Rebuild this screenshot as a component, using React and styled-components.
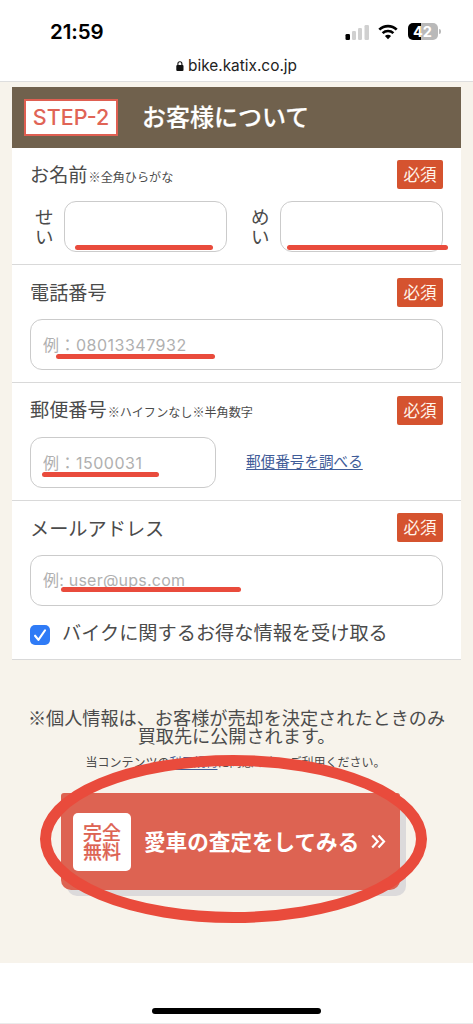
import React from "react";
import styled, { createGlobalStyle } from "styled-components";

const GlobalStyle = createGlobalStyle`
  * { box-sizing: border-box; }
  html, body { margin: 0; padding: 0; background: #fff; }
  body {
    font-family: "Noto Sans CJK JP", Inter, sans-serif;
    color: #4b4b4b;
  }
`;

const Screen = styled.div`
  width: 473px;
  height: 1024px;
  display: flex;
  flex-direction: column;
  overflow: hidden;
  background: #fff;
  border-bottom: 1px solid #ebebeb;
`;

const StatusBar = styled.div`
  height: 54px;
  padding: 9px 32px 0 50px;
  display: flex;
  align-items: center;
  justify-content: space-between;
  font-family: Inter, sans-serif;
`;

const Clock = styled.span`
  font-size: 20.5px;
  font-weight: 600;
  letter-spacing: -0.1px;
  color: #000;
`;

const StatusIcons = styled.div`
  display: flex;
  align-items: center;
`;

const Battery = styled.div`
  width: 30px;
  height: 17px;
  margin-left: 10px;
  padding-right: 1px;
  border-radius: 5px;
  background: linear-gradient(90deg, #000 0 42%, #b9b9b9 42%);
  color: #fff;
  font-size: 14.5px;
  line-height: 17px;
  font-weight: 700;
  text-align: center;
`;

const BatteryTip = styled.div`
  width: 2px;
  height: 5px;
  margin-left: 1px;
  border-radius: 0 2px 2px 0;
  background: #b9b9b9;
`;

const AddressBar = styled.div`
  height: 28px;
  padding-bottom: 4px;
  display: flex;
  align-items: center;
  justify-content: center;
  gap: 4px;
  border-bottom: 1px solid #dedede;
  font-family: Inter, sans-serif;
  font-size: 15.4px;
  line-height: 20px;
  color: #222;
`;

const Page = styled.main`
  height: 881px;
  padding: 5px 12px 0;
  background: #f7f3eb;
`;

const StepHeader = styled.header`
  height: 61px;
  padding-left: 12px;
  display: flex;
  align-items: center;
  gap: 24px;
  background: #70614d;
`;

const StepTag = styled.span`
  width: 94px;
  height: 37px;
  border: 2.5px solid #df5f52;
  background: #fff;
  color: #e06456;
  font-family: Inter, sans-serif;
  font-size: 21.5px;
  font-weight: 500;
  line-height: 33px;
  text-align: center;
`;

const StepTitle = styled.h1`
  margin: 0 0 3px;
  color: #fff;
  font-size: 24px;
  line-height: 32px;
  font-weight: 500;
  -webkit-text-stroke: 0.2px #fff;
`;

const Section = styled.section`
  height: ${(p) => p.$height}px;
  padding: ${(p) => p.$top || 12}px 18px 0;
  background: #fff;
  border-bottom: 1px solid #d9d9d9;
`;

const LabelRow = styled.div`
  display: flex;
  justify-content: space-between;
  align-items: center;
  height: 30px;
  margin-bottom: 12px;
`;

const Label = styled.div`
  padding-top: ${(p) => p.$drop}px;
  font-size: 19.2px;
  line-height: 28px;
  white-space: nowrap;
`;

const Hint = styled.small`
  margin-left: 1px;
  font-size: 12.1px;
`;

const Required = styled.span`
  width: 46px;
  height: 29px;
  border-radius: 2px;
  background: #d5532f;
  color: #fff4ea;
  font-size: 16.5px;
  line-height: 28px;
  text-align: center;
`;

const FieldRow = styled.div`
  display: flex;
  align-items: center;
`;

const Kana = styled.span`
  width: 19px;
  margin-left: ${(p) => p.$before}px;
  margin-right: ${(p) => p.$after}px;
  padding-bottom: 2px;
  font-size: 18.5px;
  line-height: 20px;
`;

const Field = styled.div`
  position: relative;
  width: ${(p) => p.$width}px;
  height: 51px;
`;

const Input = styled.input`
  width: 100%;
  height: 100%;
  padding: 0 12px;
  border: 1.5px solid #cbcbcb;
  border-radius: 12px;
  background: #fff;
  outline: none;
  font-family: Inter, "Noto Sans CJK JP", sans-serif;
  font-size: 16px;
  letter-spacing: ${(p) => p.$tracking || 0}px;
  &::placeholder { color: #b0b0b0; opacity: 1; }
`;

const Mark = styled.i`
  position: absolute;
  left: ${(p) => p.$left}px;
  top: ${(p) => p.$top}px;
  width: ${(p) => p.$width}px;
  height: 5px;
  border-radius: 3px;
  background: #e94b3c;
`;

const Link = styled.a`
  color: #3f5c98;
  text-decoration: underline;
  text-underline-offset: 2px;
`;

const LookupLink = styled(Link)`
  margin-left: 30px;
  padding-bottom: 4px;
  font-size: 14.6px;
`;

const CheckRow = styled.label`
  display: flex;
  align-items: center;
  gap: 12px;
  margin-top: 12px;
  font-size: 19.2px;
  line-height: 28px;
  white-space: nowrap;
`;

const CheckBox = styled.span`
  width: 20px;
  height: 20px;
  margin-top: 6px;
  border-radius: 5px;
  background: #2f7bf6;
  display: flex;
`;

const Notice = styled.p`
  margin: 48px 0 0;
  font-size: 18.15px;
  line-height: 18px;
  text-align: center;
  white-space: nowrap;
`;

const Terms = styled.p`
  margin: 9px 0 0;
  padding-right: 2px;
  font-size: 12px;
  line-height: 18px;
  text-align: center;
`;

const CallToAction = styled.div`
  position: relative;
  width: 339px;
  margin: 22px 0 0 49px;
`;

const SubmitButton = styled.button`
  width: 339px;
  height: 97px;
  padding: 0 0 0 12px;
  display: flex;
  align-items: center;
  border: 0;
  border-radius: 3px 3px 10px 10px;
  background: #dd6352;
  box-shadow: 6px 6px 0 #dcdadb;
  font-family: inherit;
  color: #fff;
`;

const FreeTag = styled.span`
  width: 58px;
  height: 58px;
  padding-top: 9px;
  border-radius: 5px;
  background: #fff;
  color: #dd6352;
  font-size: 19px;
  line-height: 19.5px;
  font-weight: 500;
  -webkit-text-stroke: 0.2px #dd6352;
`;

const SubmitText = styled.span`
  margin: 0 12px 2px 13px;
  font-size: 21.6px;
  line-height: 30px;
  font-weight: 700;
  white-space: nowrap;
`;

const Ring = styled.svg`
  position: absolute;
  left: -22px;
  top: -40px;
  pointer-events: none;
`;

const HomeArea = styled.footer`
  flex: 1;
  display: flex;
  justify-content: center;
  padding-top: 45px;
`;

const HomeBar = styled.div`
  width: 169px;
  height: 6px;
  border-radius: 3px;
  background: #000;
`;

const SignalIcon = () => (
  <svg width="25" height="16" viewBox="0 0 25 16">
    <rect x="0.5" y="10" width="4.5" height="6" rx="1.3" fill="#000" />
    <rect x="7" y="7" width="4" height="9" rx="1.3" fill="#d0d0d0" />
    <rect x="13" y="4" width="4" height="12" rx="1.3" fill="#d0d0d0" />
    <rect x="19.5" y="1" width="4.5" height="15" rx="1.3" fill="#d0d0d0" />
  </svg>
);

const WifiSvg = styled.svg`
  margin-left: 8px;
`;

const WifiIcon = () => (
  <WifiSvg width="20" height="16" viewBox="0 0 20 16">
    <path d="M1.3 5.6C6.2.9 13.8.9 18.7 5.6" fill="none" stroke="#000" strokeWidth="2.7" />
    <path d="M4.6 9.1c3-2.8 7.8-2.8 10.8 0" fill="none" stroke="#000" strokeWidth="2.6" />
    <path d="M6.9 11.9c1.8-1.6 4.4-1.6 6.2 0L10 15.2z" fill="#000" />
  </WifiSvg>
);

const LockIcon = () => (
  <svg width="8" height="10" viewBox="0 0 8 10">
    <rect x="0.3" y="4" width="7.2" height="6" rx="1.1" fill="#111" />
    <path d="M1.9 5V2.7a2 2 0 0 1 4 0V5" fill="none" stroke="#111" strokeWidth="1.1" />
  </svg>
);

const Heading = ({ children, hint, drop = 0 }) => (
  <LabelRow>
    <Label $drop={drop}>{children}{hint && <Hint>{hint}</Hint>}</Label>
    <Required>必須</Required>
  </LabelRow>
);

const MarkedField = ({ width, mark, ...input }) => (
  <Field $width={width}>
    <Input {...input} />
    <Mark $left={mark[0]} $top={mark[1]} $width={mark[2]} />
  </Field>
);

export default function App() {
  return (
    <Screen>
      <GlobalStyle />
      <StatusBar>
        <Clock>21:59</Clock>
        <StatusIcons>
          <SignalIcon />
          <WifiIcon />
          <Battery>42</Battery>
          <BatteryTip />
        </StatusIcons>
      </StatusBar>
      <AddressBar>
        <LockIcon />
        <span>bike.katix.co.jp</span>
      </AddressBar>

      <Page>
        <StepHeader>
          <StepTag>STEP-2</StepTag>
          <StepTitle>お客様について</StepTitle>
        </StepHeader>

        <Section $height={117} $top={11}>
          <Heading hint="※全角ひらがな" drop={2}>お名前</Heading>
          <FieldRow>
            <Kana $before={5} $after={10}>せい</Kana>
            <MarkedField width={163} mark={[11, 44, 138]} />
            <Kana $before={24} $after={10}>めい</Kana>
            <MarkedField width={163} mark={[7, 44, 161]} />
          </FieldRow>
        </Section>

        <Section $height={118}>
          <Heading>電話番号</Heading>
          <MarkedField width={413} mark={[26, 35, 159]} placeholder="例：08013347932" $tracking={0.5} />
        </Section>

        <Section $height={118}>
          <Heading hint="※ハイフンなし※半角数字">郵便番号</Heading>
          <FieldRow>
            <MarkedField width={186} mark={[12, 35, 117]} placeholder="例：1500031" $tracking={0.5} />
            <LookupLink>郵便番号を調べる</LookupLink>
          </FieldRow>
        </Section>

        <Section $height={159} $top={11.5}>
          <Heading>メールアドレス</Heading>
          <MarkedField width={413} mark={[31, 32, 180]} placeholder="例: user@ups.com" $tracking={0.22} />
          <CheckRow>
            <CheckBox>
              <svg width="20" height="20" viewBox="0 0 19 19">
                <path d="M4.8 10.2l3.2 4L14.3 5" fill="none" stroke="#fff" strokeWidth="2" strokeLinecap="round" strokeLinejoin="round" />
              </svg>
            </CheckBox>
            バイクに関するお得な情報を受け取る
          </CheckRow>
        </Section>

        <Notice>
          ※個人情報は、お客様が売却を決定されたときのみ
          <br />
          買取先に公開されます。
        </Notice>
        <Terms>
          当コンテンツの<Link>利用規約</Link>に同意の上、ご利用ください。
        </Terms>

        <CallToAction>
          <SubmitButton>
            <FreeTag>完全<br />無料</FreeTag>
            <SubmitText>愛車の査定をしてみる</SubmitText>
            <svg width="15" height="15" viewBox="0 0 15 15" fill="none" stroke="#fff" strokeWidth="2.2">
              <path d="M1.2 1.5l5.5 6-5.5 6M7.5 1.5l5.5 6-5.5 6" />
            </svg>
          </SubmitButton>
          <Ring width="390" height="172" viewBox="0 0 390 172">
            <ellipse cx="194.5" cy="86" rx="188" ry="78.5" fill="none" stroke="#e94b3c" strokeWidth="11" />
          </Ring>
        </CallToAction>
      </Page>

      <HomeArea>
        <HomeBar />
      </HomeArea>
    </Screen>
  );
}
